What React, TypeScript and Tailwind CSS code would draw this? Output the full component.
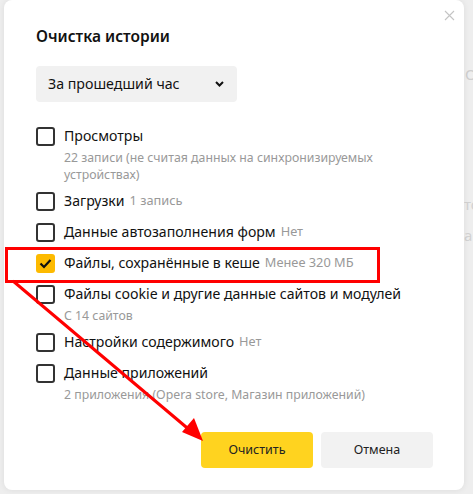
import React from "react";

type Row = {
  label: string;
  hint?: string;
  sub?: string[];
  checked?: boolean;
};

const rows: Row[] = [
  { label: "Просмотры", sub: ["22 записи (не считая данных на синхронизируемых", "устройствах)"] },
  { label: "Загрузки", hint: "1 запись" },
  { label: "Данные автозаполнения форм", hint: "Нет" },
  { label: "Файлы, сохранённые в кеше", hint: "Менее 320 МБ", checked: true },
  { label: "Файлы cookie и другие данные сайтов и модулей", sub: ["С 14 сайтов"] },
  { label: "Настройки содержимого", hint: "Нет" },
  { label: "Данные приложений", sub: ["2 приложения (Opera store, Магазин приложений)"] },
];

function Checkbox({ checked }: { checked?: boolean }) {
  if (checked) {
    return (
      <div className="w-[19px] h-[19px] mt-[4px] shrink-0 rounded-[3px] bg-[#fdba00] flex items-center justify-center">
        <svg width="13" height="11" viewBox="0 0 13 11">
          <path d="M1.5 5.5 L5 9 L11.5 2" fill="none" stroke="#111" strokeWidth="2.2" />
        </svg>
      </div>
    );
  }
  return <div className="w-[19px] h-[19px] mt-[4px] shrink-0 rounded-[3px] border-2 border-[#333]" />;
}

export default function App() {
  return (
    <div
      className="relative w-[473px] h-[494px] bg-[#eeeeee] overflow-hidden"
      style={{ fontFamily: '"Noto Sans", "Open Sans", sans-serif' }}
    >
      {/* faint background text */}
      <div className="absolute left-[465px] top-[63px] text-[15px] text-[#cfcfcf]">О</div>
      <div className="absolute left-[464px] top-[193px] text-[15px] text-[#d2d2d2]">то</div>
      <div className="absolute left-[464px] top-[224px] text-[15px] text-[#d2d2d2]">а</div>

      <div className="absolute left-[4px] top-0 w-[460px] h-[490px] bg-white rounded-[8px] shadow-[0_0_6px_rgba(0,0,0,0.08)] flex flex-col pl-[32px] pr-[31px] pt-[26px]">
        <div className="absolute right-[9px] top-[10px]">
          <svg width="11" height="11" viewBox="0 0 11 11">
            <path d="M1 1 L10 10 M10 1 L1 10" stroke="#c4c4c4" strokeWidth="1.1" />
          </svg>
        </div>

        <div className="text-[15.5px] leading-[20px] font-semibold text-[#111]">Очистка истории</div>

        <div className="mt-[20px] w-[201px] h-[36px] bg-[#f1f1f1] rounded-[4px] flex items-center justify-between pl-[12px] pr-[13px]">
          <span className="text-[14.2px] text-[#111]">За прошедший час</span>
          <svg width="9" height="6" viewBox="0 0 9 6">
            <path d="M1 1 L4.5 4.5 L8 1" fill="none" stroke="#111" strokeWidth="2" />
          </svg>
        </div>

        <div className="mt-[21px] flex flex-col">
          {rows.map((r) => (
            <div key={r.label} className="flex items-start gap-[9px] pb-[5px]">
              <Checkbox checked={r.checked} />
              <div className="flex flex-col">
                <div className="h-[26px] flex items-center whitespace-nowrap">
                  <span className="text-[14.1px] text-[#111]">{r.label}</span>
                  {r.hint && <span className="ml-[5px] text-[12.8px] text-[#999]">{r.hint}</span>}
                </div>
                {r.sub?.map((s) => (
                  <div key={s} className="h-[17px] leading-[17px] text-[12.3px] text-[#999] whitespace-nowrap">
                    {s}
                  </div>
                ))}
              </div>
            </div>
          ))}
        </div>

        <div className="mt-[24px] flex justify-end gap-[8px]">
          <button className="w-[112px] h-[36px] rounded-[4px] bg-[#ffd31f] text-[12.5px] text-[#222]">Очистить</button>
          <button className="w-[112px] h-[36px] rounded-[4px] bg-[#f2f2f2] text-[12.5px] text-[#222]">Отмена</button>
        </div>
      </div>

      {/* annotation overlay */}
      <div className="absolute left-[5px] top-[247px] w-[375px] h-[36px] border-[3px] border-[#ff0000]" />
      <svg className="absolute left-0 top-0" width="473" height="494" viewBox="0 0 473 494">
        <line x1="13" y1="281" x2="192" y2="432" stroke="#f00" strokeWidth="3" />
        <polygon points="203,441 182,432 194,418" fill="#f00" />
      </svg>
    </div>
  );
}
